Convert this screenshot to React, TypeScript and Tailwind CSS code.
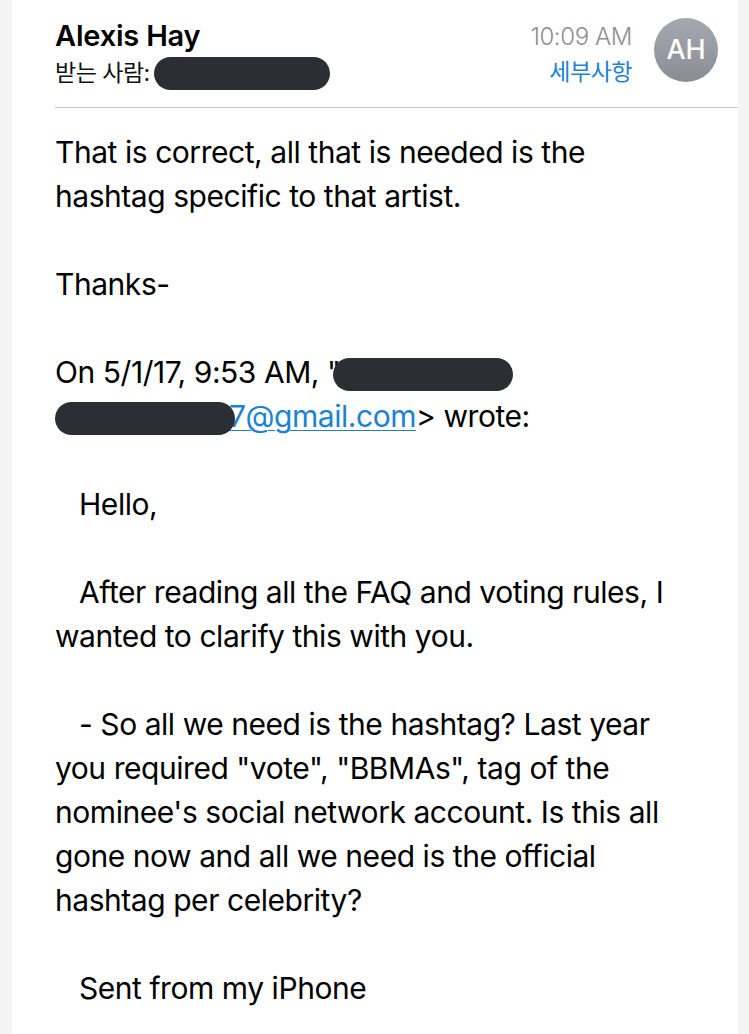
import React from 'react';

const font = { fontFamily: '"Inter", "Noto Sans CJK KR", sans-serif' };

function Redacted({ w, className = '' }: { w: number; className?: string }) {
  return (
    <span
      className={`inline-block h-[33px] rounded-full bg-[#2b2e33] align-middle ${className}`}
      style={{ width: w }}
    />
  );
}

const Line = ({ children, indent = false }: { children?: React.ReactNode; indent?: boolean }) => (
  <div className={`h-[44px] leading-[44px] whitespace-nowrap ${indent ? 'pl-[24px]' : ''}`}>{children}</div>
);

export default function App() {
  return (
    <div className="flex min-h-[1034px] w-[749px] bg-white text-black" style={font}>
      {/* left gutter */}
      <div className="w-[12px] shrink-0 bg-[#f4f4f4]" />

      <div className="flex-1">
        {/* Header */}
        <div className="ml-[43px] flex h-[108px] border-b border-[#c8c8cc]">
          <div className="flex-1 pt-[18px]">
            <div className="text-[29px] font-semibold leading-[36px] tracking-[-0.2px]">Alexis Hay</div>
            <div className="mt-[2px] flex items-center text-[23px] leading-[34px] text-[#111]">
              <span className="tracking-[-0.5px]">받는 사람:</span>
              <Redacted w={176} className="ml-[4px]" />
            </div>
          </div>
          <div className="flex flex-col items-end pt-[21px]">
            <div className="text-[24px] font-light leading-[32px] tracking-[-0.4px] text-[#8e8e93]">10:09 AM</div>
            <div className="mt-[4px] text-[23px] leading-[30px] tracking-[-0.5px] text-[#1a82d6]">세부사항</div>
          </div>
          <div className="ml-[22px] mr-[20px] mt-[18px] flex h-[64px] w-[64px] items-center justify-center rounded-full bg-gradient-to-b from-[#a6a8b0] to-[#8b8d95] text-[27px] font-medium text-white">
            AH
          </div>
        </div>

        {/* Body */}
        <div className="ml-[43px] pt-[22px] text-[30px] tracking-[-0.45px]">
          <Line>That is correct, all that is needed is the</Line>
          <Line>hashtag specific to that artist.</Line>
          <Line />
          <Line>Thanks-</Line>
          <Line />
          <Line>
            On 5/1/17, 9:53 AM, "<Redacted w={180} className="-ml-[8px] relative" />
          </Line>
          <Line>
            <Redacted w={180} className="relative z-10 -mr-[6px]" />
            <a href="#" className="text-[#1a82d6] underline underline-offset-[3px] decoration-1">7@gmail.com</a>
            &gt; wrote:
          </Line>
          <Line />
          <Line indent>Hello,</Line>
          <Line />
          <Line indent>After reading all the FAQ and voting rules, I</Line>
          <Line>wanted to clarify this with you.</Line>
          <Line />
          <Line indent>- So all we need is the hashtag? Last year</Line>
          <Line>you required "vote", "BBMAs", tag of the</Line>
          <Line>nominee's social network account. Is this all</Line>
          <Line>gone now and all we need is the official</Line>
          <Line>hashtag per celebrity?</Line>
          <Line />
          <Line indent>Sent from my iPhone</Line>
        </div>
      </div>

      {/* right gutter */}
      <div className="w-[11px] shrink-0 bg-[#f4f4f4]" />
    </div>
  );
}
